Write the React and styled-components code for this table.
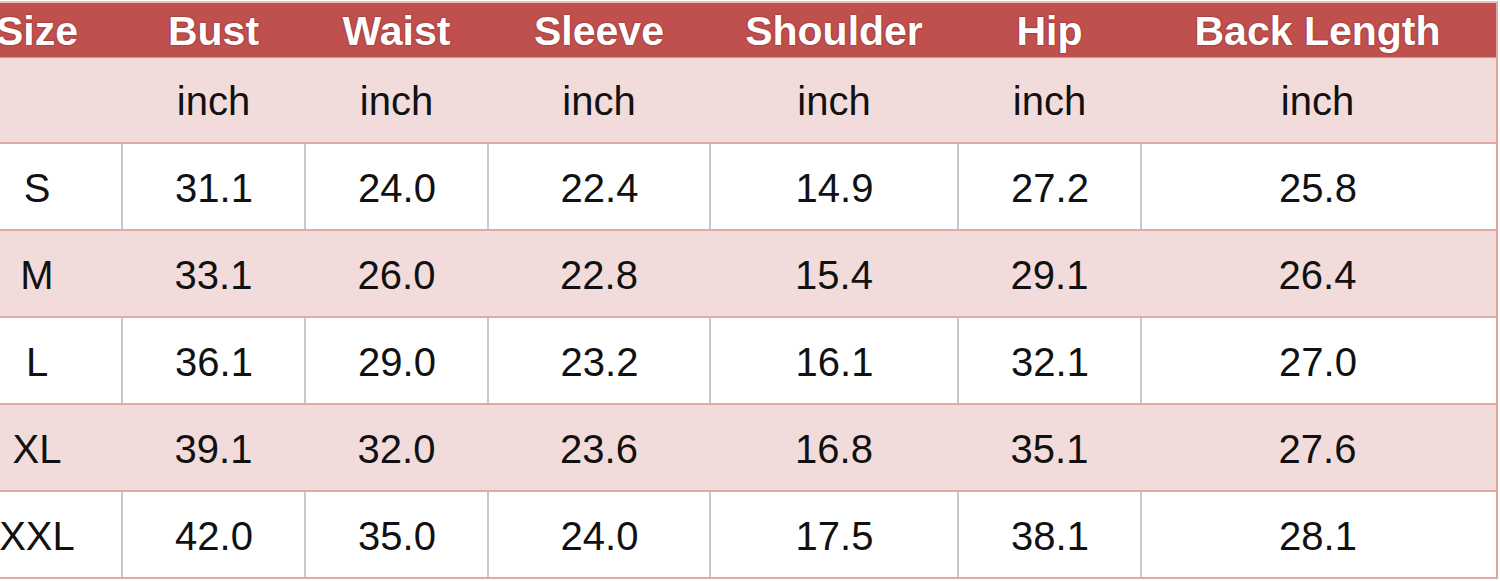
import React from 'react';
import styled, { createGlobalStyle } from 'styled-components';

const GlobalStyle = createGlobalStyle`
	html, body {
		margin: 0;
		padding: 0;
		background: #FFFFFF;
		overflow: hidden;
	}
`;

const columns = ['Size', 'Bust', 'Waist', 'Sleeve', 'Shoulder', 'Hip', 'Back Length'];

const rows = [
	['S', '31.1', '24.0', '22.4', '14.9', '27.2', '25.8'],
	['M', '33.1', '26.0', '22.8', '15.4', '29.1', '26.4'],
	['L', '36.1', '29.0', '23.2', '16.1', '32.1', '27.0'],
	['XL', '39.1', '32.0', '23.6', '16.8', '35.1', '27.6'],
	['XXL', '42.0', '35.0', '24.0', '17.5', '38.1', '28.1'],
];

const App = () => {
	return (
		<>
			<GlobalStyle />
			<Chart>
				<HeadRow>
					{columns.map((name) => (
						<HeadCell key={name}>{name}</HeadCell>
					))}
				</HeadRow>
				<Row $height={86} $pink>
					{columns.map((name, i) => (
						<Cell key={name}>{i === 0 ? '' : 'inch'}</Cell>
					))}
				</Row>
				{rows.map((row, r) => (
					<Row key={row[0]} $height={87} $pink={r % 2 === 1}>
						{row.map((value, i) => (
							<Cell key={i} $divided={r % 2 === 0 && i > 0}>
								{value}
							</Cell>
						))}
					</Row>
				))}
			</Chart>
		</>
	);
};

const Chart = styled.div`
	margin-top: 1px;
	margin-left: -48px;
	width: 1544px;
	border-top: 2px solid #EBBDBC;
	border-right: 2px solid #DDA4A4;
	font-family: "Liberation Sans", Arial, sans-serif;
`;

const grid = `
	display: grid;
	grid-template-columns: 170px 183px 183px 222px 248px 183px 353px;
`;

const HeadRow = styled.div`
	${grid}
	height: 55px;
	box-sizing: border-box;
	background: #C0504D;
	border-bottom: 1px solid #D98C8A;
`;

const HeadCell = styled.div`
	display: flex;
	align-items: center;
	justify-content: center;
	padding-top: 3px;
	color: #FFFFFF;
	font-size: 41px;
	font-weight: 700;
	text-shadow: 0 0 2px rgba(90, 10, 10, 0.7);
	white-space: nowrap;
`;

const Row = styled.div`
	${grid}
	height: ${(p) => p.$height}px;
	box-sizing: border-box;
	background: ${(p) => (p.$pink ? '#F2DCDB' : '#FFFFFF')};
	border-bottom: 2px solid #E3A7A6;
`;

const Cell = styled.div`
	display: flex;
	align-items: center;
	justify-content: center;
	padding-top: 3px;
	color: #111111;
	font-size: 40px;
	border-left: ${(p) => (p.$divided ? '2px solid #CCC6D3' : 'none')};
	margin-left: ${(p) => (p.$divided ? '-1px' : '0')};
`;

export default App;
